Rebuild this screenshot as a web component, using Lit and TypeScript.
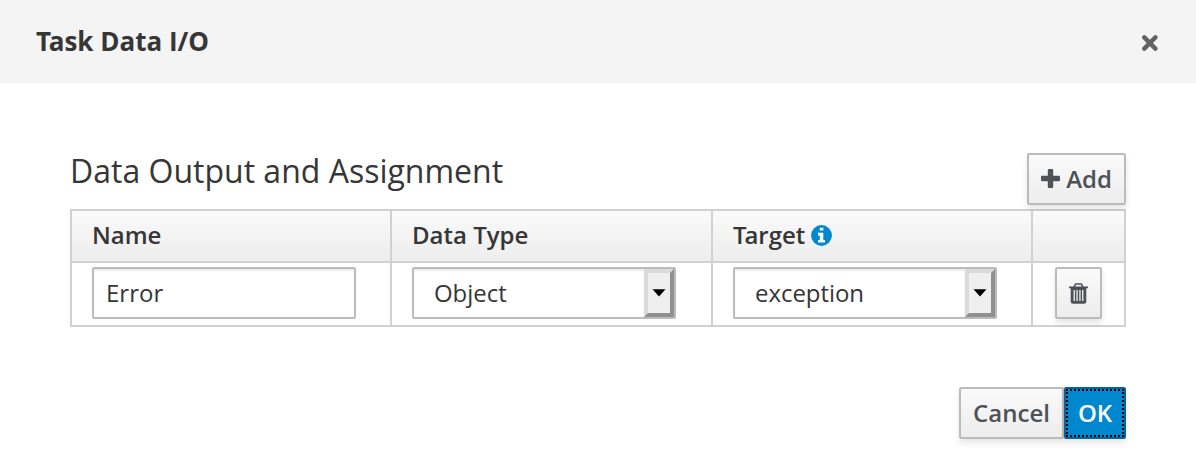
import { LitElement, html, css } from "lit";
import { customElement, property } from "lit/decorators.js";

@customElement("data-select")
class DataSelect extends LitElement {
  @property() value = "";

  static styles = css`
    :host {
      display: flex;
      box-sizing: border-box;
      width: 264px;
      height: 52px;
      border: 2px solid #bbb;
      border-radius: 2px;
      background: #fff;
    }
    .value {
      flex: 1;
      padding-left: 20px;
      line-height: 47px;
      letter-spacing: -0.05px;
      box-shadow: inset 0 2px 2px rgba(3, 3, 3, 0.075);
    }
    .toggle {
      box-sizing: border-box;
      display: flex;
      align-items: center;
      justify-content: center;
      width: 30px;
      border: 4px solid;
      border-color: #dadada #8f908f #8f908f #dadada;
      background: #efefef;
    }
    svg {
      display: block;
    }
  `;

  render() {
    return html`
      <div class="value">${this.value}</div>
      <div class="toggle">
        <svg width="14" height="8" viewBox="0 0 14 8"><path d="M0.5 0.3h13L7 7.6z" /></svg>
      </div>
    `;
  }
}

@customElement("app-root")
class AppRoot extends LitElement {
  static styles = css`
    :host {
      display: block;
      height: 469px;
      background: #fff;
      color: #363636;
      font: 24px/40px "Open Sans", sans-serif;
    }
    svg {
      display: block;
    }
    .kern {
      letter-spacing: -0.09em;
    }
    .header {
      display: flex;
      justify-content: space-between;
      box-sizing: border-box;
      height: 83px;
      padding: 21px 37px 0 36px;
      background: #f4f4f4;
    }
    .title {
      font-size: 26px;
      font-weight: 700;
    }
    .close {
      padding-top: 14px;
    }
    .body {
      padding: 70px 70px 0;
    }
    .bar {
      display: flex;
      justify-content: space-between;
      height: 56px;
    }
    .heading {
      font-size: 32px;
      line-height: 36px;
    }
    .button {
      box-sizing: border-box;
      display: flex;
      align-items: center;
      justify-content: center;
      height: 52px;
      border: 2px solid #bbb;
      border-radius: 2px;
      background: linear-gradient(#fafafa, #ededed);
      box-shadow: 0 4px 6px rgba(3, 3, 3, 0.1);
      color: #4d5258;
      font-weight: 600;
      line-height: 48px;
    }
    .add {
      width: 99px;
      gap: 6px;
    }
    .table {
      display: grid;
      grid-template-columns: 320px 321px 320px 93px;
      grid-template-rows: 52px 64px;
      border: 2px solid #d1d1d1;
      border-width: 2px 0 0 2px;
    }
    .th,
    .td {
      box-sizing: border-box;
      border: 2px solid #d1d1d1;
      border-width: 0 2px 2px 0;
      padding-left: 20px;
    }
    .th {
      display: flex;
      align-items: flex-start;
      gap: 6px;
      background: linear-gradient(#fafafa, #ededed);
      font-weight: 600;
      line-height: 48px;
    }
    .info {
      margin-top: 14px;
    }
    .td {
      padding-top: 4px;
    }
    .actions {
      padding-left: 22px;
    }
    .input {
      box-sizing: border-box;
      width: 264px;
      height: 52px;
      border: 2px solid #bbb;
      border-radius: 2px;
      padding-left: 12px;
      line-height: 47px;
      box-shadow: inset 0 2px 2px rgba(3, 3, 3, 0.075);
    }
    .trash {
      width: 47px;
    }
    .trash svg {
      margin-top: 1px;
    }
    .footer {
      display: flex;
      justify-content: flex-end;
      padding-top: 60px;
    }
    .cancel {
      width: 105px;
    }
    .ok {
      width: 62px;
      border-color: #00659c;
      background: #0088ce;
      color: #fff;
      outline: 2px dotted #000;
      outline-offset: -4px;
    }
  `;

  render() {
    return html`
      <div class="header">
        <div class="title"><span class="kern">T</span>ask Data I/O</div>
        <div class="close">
          <svg width="19" height="16" viewBox="0 0.5 19 16">
            <path d="M4.3 2.9l11.1 11.2M15.4 2.9L4.3 14.1" stroke="#636363" stroke-width="4.4" stroke-linecap="round" />
          </svg>
        </div>
      </div>
      <div class="body">
        <div class="bar">
          <div class="heading">Data Output and Assignment</div>
          <div class="button add">
            <svg width="19" height="20" viewBox="0 0 19 20">
              <path
                d="M8 0h3a1.2 1.2 0 0 1 1.2 1.2v5.6h5.6A1.2 1.2 0 0 1 19 8v3a1.2 1.2 0 0 1-1.2 1.2h-5.6v5.6A1.2 1.2 0 0 1 11 19H8a1.2 1.2 0 0 1-1.2-1.2v-5.6H1.2A1.2 1.2 0 0 1 0 11V8a1.2 1.2 0 0 1 1.2-1.2h5.6V1.2A1.2 1.2 0 0 1 8 0z"
                fill="#4d5258"
              />
            </svg>
            <span>Add</span>
          </div>
        </div>
        <div class="table">
          <div class="th">Name</div>
          <div class="th">Data Type</div>
          <div class="th">
            <span><span class="kern">T</span>arget</span>
            <svg class="info" width="21" height="21" viewBox="0 0 21 21">
              <circle cx="10.5" cy="10.5" r="10.4" fill="#0088ce" />
              <path d="M8.8 2.7h3.5v2.8H8.8zM7 7.8h5.3v7.2H14v2.6H7V15h1.8v-4.6H7z" fill="#fff" />
            </svg>
          </div>
          <div class="th"></div>
          <div class="td"><div class="input">Error</div></div>
          <div class="td"><data-select value="Object"></data-select></div>
          <div class="td"><data-select value="exception"></data-select></div>
          <div class="td actions">
            <div class="button trash">
              <svg width="19" height="21" viewBox="0 0 19 21">
                <path d="M5.2 4.2L6 1.9q0.3-0.9 1.2-0.9h4.6q0.9 0 1.2 0.9L13.8 4.2" fill="none" stroke="#4d5258" stroke-width="1.6" />
                <path
                  fill-rule="evenodd"
                  d="M0 3.6h19v1.6h-1.7V18.3q0 2.5-2.5 2.5H4.2q-2.5 0-2.5-2.5V5.2H0zM4.6 7v11h1.3V7zM7.4 7v11h1.3V7zM10.3 7v11h1.3V7zM13.1 7v11h1.3V7z"
                  fill="#4d5258"
                />
              </svg>
            </div>
          </div>
        </div>
        <div class="footer">
          <div class="button cancel">Cancel</div>
          <div class="button ok">OK</div>
        </div>
      </div>
    `;
  }
}
